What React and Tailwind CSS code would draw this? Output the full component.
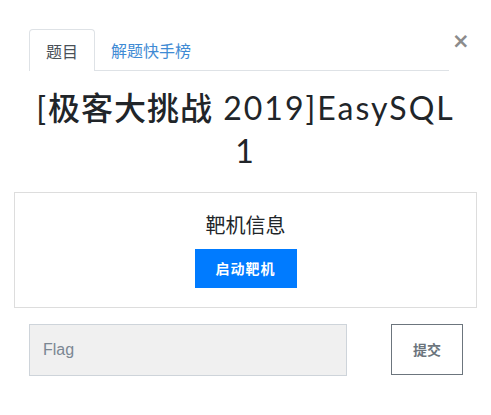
import React from "react";

export default function App() {
  return (
    <div className="w-[491px] h-[415px] bg-white overflow-hidden font-['Noto_Sans_CJK_SC','Noto_Sans',sans-serif]">
      <div className="flex items-start pt-[29px] pl-[29px]">
        <div className="flex w-[420px] h-[42px] border-b border-[#dee2e6]">
          <div className="w-[66px] h-[42px] border border-b-0 border-[#dee2e6] rounded-t-[4px] bg-white flex items-center justify-center text-[16px] text-[#495057]">
            题目
          </div>
          <div className="ml-[16px] h-[41px] flex items-center text-[16px] text-[#3f8bd4]">
            解题快手榜
          </div>
        </div>
        <div className="ml-[3px] mt-[2px] text-[21px] leading-[21px] font-bold text-[#8c8c8c] font-['DejaVu_Sans',sans-serif]">
          ×
        </div>
      </div>

      <div className="mt-[14px] text-center text-[32px] leading-[43px] text-[#212529] font-['Lato','Noto_Sans_CJK_SC',sans-serif] tracking-[2px]">
        [<span className="font-medium tracking-[1px] font-['Noto_Sans_CJK_SC',sans-serif]">极客大挑战</span> 2019]EasySQL
        <br />1
      </div>

      <div className="mx-[14px] mt-[20px] h-[116px] border border-[#dddddd] flex flex-col items-center pt-[18px]">
        <div className="text-[20px] leading-[28px] text-[#212529]">靶机信息</div>
        <div className="mt-[10px] w-[102px] h-[39px] bg-[#007bff] flex items-center justify-center text-white text-[14px] font-bold tracking-[1px]">
          启动靶机
        </div>
      </div>

      <div className="flex mt-[16px] pl-[29px]">
        <div className="w-[318px] h-[52px] bg-[#f0f0f0] border border-[#ced4da] flex items-center pl-[13px] text-[16px] text-[#7b8793] font-['Liberation_Sans',Arial,sans-serif]">
          Flag
        </div>
        <div className="ml-[44px] w-[72px] h-[51px] border border-[#6c757d] flex items-center justify-center text-[14px] font-bold text-[#6c757d]">
          提交
        </div>
      </div>
    </div>
  );
}
